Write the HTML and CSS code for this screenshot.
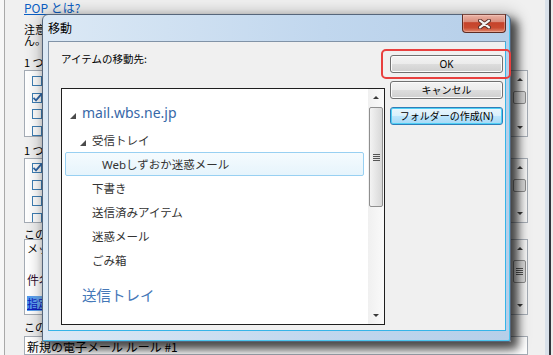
FILE: index.html
```html
<!DOCTYPE html>
<html>

<head>
  <meta charset="utf-8">
  <meta name="viewport" content="width=device-width">
  <title>移動</title>

  <link rel="stylesheet" href="styles.css">
</head>

<body>
  <div class="frame-left"></div>

  <main class="backwin">
    <a class="back-link" href="#">POP とは?</a>
    <p class="note">注意: POP3 アカウントでは、サーバー上のメッセージに対してルールを適用することはできませ<br>ん。</p>

    <p class="cap cap-1">1 つ以上の条件を選択してください</p>
    <div class="listbox box-1">
      <ul class="checks">
        <li><span class="cb"></span>メッセージを受信したとき</li>
        <li><span class="cb"><svg viewBox="0 0 10 10" width="10" height="10"><path d="M1.5 4.8 L4 7.4 L9.6 0.8" fill="none" stroke="#2f67a8" stroke-width="1.8"/></svg></span>件名に特定の文字が含まれる場合</li>
        <li><span class="cb"></span>差出人が特定のアドレスの場合</li>
        <li><span class="cb"></span>宛先が特定のアドレスの場合</li>
      </ul>
      <div class="vscroll">
        <div class="sb-btn up"></div>
        <div class="sb-track"><div class="thumb"></div></div>
        <div class="sb-btn down"></div>
      </div>
    </div>

    <p class="cap cap-2">1 つ以上の処理を選択してください</p>
    <div class="listbox box-2">
      <ul class="checks">
        <li><span class="cb"><svg viewBox="0 0 10 10" width="10" height="10"><path d="M1.5 4.8 L4 7.4 L9.6 0.8" fill="none" stroke="#2f67a8" stroke-width="1.8"/></svg></span>指定フォルダーに移動する</li>
        <li><span class="cb"></span>指定フォルダーにコピーする</li>
        <li><span class="cb"></span>削除する</li>
        <li><span class="cb"></span>転送する</li>
      </ul>
      <div class="vscroll">
        <div class="sb-btn up"></div>
        <div class="sb-track"><div class="thumb"></div></div>
        <div class="sb-btn down"></div>
      </div>
    </div>

    <p class="cap cap-3">このルールの説明を編集します (下線部分をクリックしてください)</p>
    <div class="listbox box-3">
      <ul class="rules">
        <li>メッセージを受信したとき</li>
        <li class="rule-2">件名に <u>特定の文字</u> が含まれる場合</li>
        <li class="rule-hl"><u>指定</u> フォルダーに移動する</li>
      </ul>
      <div class="vscroll">
        <div class="sb-btn up"></div>
        <div class="sb-track"><div class="thumb thumb-3"><span class="grip"></span></div></div>
        <div class="sb-btn down"></div>
      </div>
    </div>

    <p class="cap cap-4">このルールの名前を指定してください</p>
    <div class="name-input">新規の電子メール ルール #1</div>
  </main>

  <div class="frame-right"></div>

  <!-- move dialog window -->
  <section class="dialog">
    <div class="titlebar">
      <span class="title">移動</span>
      <button class="close">
        <svg viewBox="0 0 13 10" width="13" height="10">
          <path d="M2 1.6 L11 8.4 M11 1.6 L2 8.4" stroke="#5b2f28" stroke-width="4" stroke-linecap="round"/>
          <path d="M2 1.6 L11 8.4 M11 1.6 L2 8.4" stroke="#f4f4f4" stroke-width="2.2" stroke-linecap="round"/>
        </svg>
      </button>
    </div>

    <div class="client">
      <div class="pane">
        <div class="pane-label">アイテムの移動先:</div>
        <div class="tree">
          <ul class="tree-items">
            <li class="node root depth-0"><span class="tri"><svg viewBox="0 0 6 6" width="6" height="6"><polygon points="6,0 6,6 0,6" fill="#4b4b4b"/></svg></span>mail.wbs.ne.jp</li>
            <li class="node first depth-1"><span class="tri"><svg viewBox="0 0 6 6" width="6" height="6"><polygon points="6,0 6,6 0,6" fill="#4b4b4b"/></svg></span>受信トレイ</li>
            <li class="node selected depth-2"><span class="pad"></span>Webしずおか迷惑メール</li>
            <li class="node depth-1"><span class="pad"></span>下書き</li>
            <li class="node depth-1"><span class="pad"></span>送信済みアイテム</li>
            <li class="node depth-1"><span class="pad"></span>迷惑メール</li>
            <li class="node depth-1"><span class="pad"></span>ごみ箱</li>
            <li class="node root last depth-0"><span class="pad"></span>送信トレイ</li>
          </ul>
          <div class="vscroll tree-scroll">
            <div class="sb-btn up"></div>
            <div class="sb-track"><div class="thumb thumb-tree"><span class="grip"></span></div></div>
            <div class="sb-btn down"></div>
          </div>
        </div>
      </div>

      <div class="actions">
        <button class="btn">OK</button>
        <button class="btn">キャンセル</button>
        <button class="btn btn-default">フォルダーの作成(N)</button>
      </div>
    </div>
  </section>

  <div class="callout"></div>
</body>

</html>
```

FILE: styles.css
```css
* {
  box-sizing: border-box;
}

body {
  margin: 0;
  width: 553px;
  height: 355px;
  overflow: hidden;
  display: flex;
  background-color: #f0f0f0;
  font-family: "Noto Sans", "Noto Sans CJK JP", sans-serif;
  font-size: 12px;
  color: #000;
}

/* background window */

.frame-left {
  width: 5px;
  background-color: #f7f7f7;
  border-right: 1px solid #a9a9a9;
}

.frame-right {
  width: 8px;
  background: linear-gradient(to right, #d9e1ea 0 4px, #30353c 4px 6px, #ececec 6px);
}

.backwin {
  width: 540px;
  padding: 1px 17px 0 19px;
  display: flex;
  flex-direction: column;
  font-family: "Noto Sans CJK JP", sans-serif;
  font-size: 11px;
  white-space: nowrap;
  overflow: hidden;
}

.back-link {
  color: #0b5fc4;
  font-size: 12px;
  line-height: 13px;
  height: 13px;
  align-self: flex-start;
}

.note {
  margin: 10px 0 0;
  line-height: 10.5px;
}

.cap {
  margin: 0;
  line-height: 12px;
  height: 12px;
}

.cap-1 { margin-top: 11px; }
.cap-2 { margin-top: 7px; }
.cap-3 { margin-top: 5px; height: 11px; }
.cap-4 { margin-top: 6px; height: 13px; line-height: 13px; }

.listbox {
  display: flex;
  background-color: white;
  border: 1px solid #a5acb5;
}

.box-1 { margin-top: 2px; height: 67px; }
.box-2 { margin-top: 2px; height: 65px; }
.box-3 { height: 80px; }

.checks,
.rules {
  flex: 1;
  list-style: none;
  margin: 0;
  overflow: hidden;
}

.checks {
  padding: 2px 0 0 7px;
}

.box-2 .checks {
  padding-top: 1px;
}

.checks li {
  height: 16.5px;
  display: flex;
  align-items: center;
  gap: 5px;
}

.cb {
  flex: none;
  width: 10px;
  height: 10px;
  border: 1px solid #3f7fb5;
  background-color: white;
  display: flex;
  overflow: visible;
}

.cb svg {
  margin: -1px 0 0 -1px;
  overflow: visible;
}

.rules {
  padding: 2px 0 0 2px;
}

.rules li {
  line-height: 13px;
}

.rule-2 {
  margin-top: 18px;
  font-size: 12px;
  color: #301030;
}

.rule-hl {
  margin-top: 10px;
  height: 15px;
  line-height: 15px !important;
  color: #1020c0;
  background: linear-gradient(to right, #4d98ee, #7cb6f2 4%, #7cb6f2);
}

.vscroll {
  width: 16px;
  display: flex;
  flex-direction: column;
  background: linear-gradient(to right, #e6e6e6, #f7f7f7);
  border-left: 1px solid #e2e2e2;
}

.sb-btn {
  height: 17px;
  display: flex;
  align-items: center;
  justify-content: center;
}

.sb-btn::before {
  content: "";
  border-left: 3px solid transparent;
  border-right: 3px solid transparent;
}

.up::before {
  border-bottom: 3px solid #3a3a3a;
}

.down::before {
  border-top: 3px solid #3a3a3a;
}

.sb-track {
  flex: 1;
  padding-top: 3px;
}

.thumb {
  height: 13px;
  margin: 0 1px;
  border: 1px solid #8f8f8f;
  border-radius: 2px;
  background: linear-gradient(to right, #f3f3f3, #d8d8d8);
  display: flex;
  align-items: center;
  justify-content: center;
}

.thumb-3 { height: 23px; }

.grip {
  width: 7px;
  height: 7px;
  background: repeating-linear-gradient(to bottom, #555 0 1px, transparent 1px 2px);
}

.name-input {
  margin-top: 2px;
  height: 20px;
  background-color: white;
  border: 1px solid #a5acb5;
  padding: 2px 0 0 2px;
  font-size: 12px;
  line-height: 15px;
}

/* dialog */

.dialog {
  position: absolute;
  left: 42px;
  top: 14px;
  width: 469px;
  height: 328px;
  border: 1px solid #56667b;
  border-radius: 6px 6px 2px 2px;
  padding: 0 4px 10px 5px;
  display: flex;
  flex-direction: column;
  background: linear-gradient(to right, #dce9f5, #c1d7ee 60%, #b6cfe9);
  box-shadow: inset -1px -1px 0 #4ec6f0, 6px 6px 9px 1px rgba(0,0,0,0.62), 2px 3px 16px 3px rgba(0,0,0,0.3);
}

.titlebar {
  height: 26px;
  display: flex;
  align-items: center;
}

.title {
  font-family: "Noto Sans CJK JP", sans-serif;
  font-size: 12px;
  line-height: 14px;
}

.close {
  margin-left: auto;
  align-self: flex-start;
  margin-top: -1px;
  width: 44px;
  height: 19px;
  padding: 0;
  border: 1px solid #5e2c23;
  border-top-color: #7a4a42;
  border-radius: 0 0 4px 4px;
  background: linear-gradient(to bottom, #eab3a6 0%, #d98c7b 40%, #c5432b 45%, #c94a30 75%, #e08a70 100%);
  display: flex;
  align-items: center;
  justify-content: center;
  box-shadow: inset 0 0 0 1px rgba(255,220,210,0.35);
}

.client {
  flex: 1;
  display: flex;
  gap: 5px;
  padding: 9px 2px 5px 12px;
  background-color: #f0f0f0;
  border: 1px solid #8193a7;
  border-right-color: #36b4e8;
  border-bottom-color: #36b4e8;
  font-family: "Noto Sans CJK JP", sans-serif;
}

.pane {
  width: 324px;
  display: flex;
  flex-direction: column;
}

.pane-label {
  font-size: 10.5px;
  line-height: 15px;
  margin-bottom: 22px;
}

.tree {
  flex: 1;
  display: flex;
  background-color: white;
  border: 1px solid #1f1f1f;
}

.tree-items {
  flex: 1;
  list-style: none;
  margin: 0;
  padding: 11px 4px 0 3px;
}

.node {
  height: 24px;
  display: flex;
  align-items: center;
  color: #333;
  font-family: "Noto Sans", "Noto Sans CJK JP", sans-serif;
  font-size: 11.5px;
  line-height: 17px;
  white-space: nowrap;
}

.node.root {
  height: 26px;
  color: #3868a8;
  font-size: 14px;
  line-height: 20px;
}

.node.first { margin-top: 2px; }

.node.last {
  margin-top: 8px;
  height: 30px;
  font-family: "Noto Sans CJK JP", sans-serif;
  font-size: 14.5px;
  line-height: 22px;
  color: #4478b8;
}

.depth-0 { padding-left: 5px; }
.depth-1 { padding-left: 15px; }
.depth-2 { padding-left: 24px; }

.tri {
  flex: none;
  width: 6px;
  height: 6px;
  margin: 5px 6px 0 0;
  display: flex;
}

.root .tri {
  margin-top: 6px;
}

.pad {
  flex: none;
  width: 12px;
}

.node.selected {
  border: 1px solid #98d0f2;
  border-radius: 2px;
  background: linear-gradient(to bottom, #f5fbfe, #e6f4fc);
}

.tree-scroll {
  border-left: none;
  background: linear-gradient(to right, #f0f0f0, #fafafa);
}

.thumb-tree {
  height: 100px;
  margin-top: -2px;
}

.actions {
  width: 113px;
  display: flex;
  flex-direction: column;
  gap: 8px;
  padding-top: 4px;
}

.btn {
  height: 18px;
  padding: 0;
  border: 1px solid #707070;
  border-radius: 3px;
  background: linear-gradient(to bottom, #f3f3f3 0%, #ebebeb 50%, #dddddd 50%, #cfcfcf 100%);
  box-shadow: inset 0 0 0 1px #fbfbfb;
  font-family: "Noto Sans", "Noto Sans CJK JP", sans-serif;
  font-size: 10px;
  line-height: 16px;
  color: #000;
}

.btn-default {
  border-color: #2f7db8;
  background: linear-gradient(to bottom, #eaf6fd 0%, #d9f0fc 50%, #bee6fd 50%, #a7d9f5 100%);
  box-shadow: inset 0 0 0 1px #4fd0f5;
}

/* annotation around the OK button */
.callout {
  position: absolute;
  left: 381px;
  top: 49px;
  width: 130px;
  height: 30px;
  border: 2px solid #e8403f;
  border-radius: 5px;
}
```
